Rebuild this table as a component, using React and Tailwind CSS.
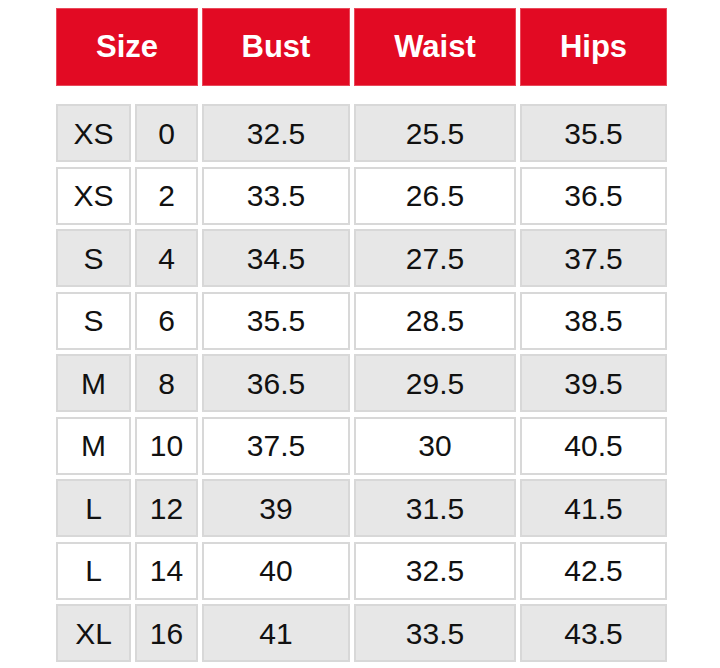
import React from "react";

const rows = [
  ["XS", "0", "32.5", "25.5", "35.5"],
  ["XS", "2", "33.5", "26.5", "36.5"],
  ["S", "4", "34.5", "27.5", "37.5"],
  ["S", "6", "35.5", "28.5", "38.5"],
  ["M", "8", "36.5", "29.5", "39.5"],
  ["M", "10", "37.5", "30", "40.5"],
  ["L", "12", "39", "31.5", "41.5"],
  ["L", "14", "40", "32.5", "42.5"],
  ["XL", "16", "41", "33.5", "43.5"],
];

export default function App() {
  return (
    <div className="w-[720px] h-[668px] bg-white pl-[56px] pt-[8px] font-['Liberation_Sans',Arial,sans-serif]">
      <div className="grid grid-cols-[75px_63px_148px_162px_147px] gap-x-[4px]">
        {["Size", "Bust", "Waist", "Hips"].map((h, i) => (
          <div
            key={h}
            className={`${i === 0 ? "col-span-2" : ""} h-[78px] bg-[#e20a23] border border-[#e8495a] flex items-center justify-center text-white font-bold text-[31px]`}
          >
            {h}
          </div>
        ))}
      </div>
      <div className="mt-[18px] grid grid-cols-[75px_63px_148px_162px_147px] gap-x-[4px] gap-y-[4.5px]">
        {rows.map((r, ri) =>
          r.map((c, ci) => (
            <div
              key={ri + "-" + ci}
              className={`h-[58px] border-2 border-[#d8d8d8] ${ri % 2 === 0 ? "bg-[#e7e7e7]" : "bg-white"} flex items-center justify-center text-[30px] text-[#111]`}
            >
              {c}
            </div>
          ))
        )}
      </div>
    </div>
  );
}
